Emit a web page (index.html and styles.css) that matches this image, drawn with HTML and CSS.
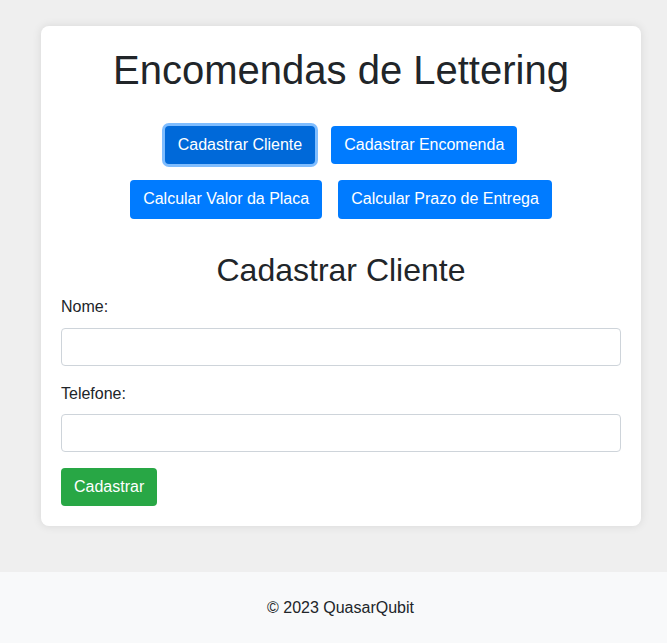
FILE: index.html
```html
<!DOCTYPE html>
<html lang="pt-BR">
<head>
<meta charset="utf-8">
<title>Encomendas de Lettering</title>
<link rel="stylesheet" href="styles.css">
</head>
<body>
<main class="page">
  <section class="card">
    <h1 class="title">Encomendas de Lettering</h1>
    <nav class="menu">
      <button class="btn btn-primary is-focused" type="button">Cadastrar Cliente</button>
      <button class="btn btn-primary" type="button">Cadastrar Encomenda</button>
      <button class="btn btn-primary" type="button">Calcular Valor da Placa</button>
      <button class="btn btn-primary" type="button">Calcular Prazo de Entrega</button>
    </nav>
    <h2 class="subtitle">Cadastrar Cliente</h2>
    <form class="form">
      <label class="label" for="nome">Nome:</label>
      <input class="input" id="nome" type="text">
      <label class="label" for="telefone">Telefone:</label>
      <input class="input input-last" id="telefone" type="text">
      <button class="btn btn-success" type="button">Cadastrar</button>
    </form>
  </section>
</main>
<footer class="footer">
  <p class="footer-text">© 2023 QuasarQubit</p>
</footer>
</body>
</html>
```

FILE: styles.css
```css
* {
  box-sizing: border-box;
}

body {
  margin: 0;
  background: #efefef;
  color: #212529;
  font-family: "Liberation Sans", Arial, sans-serif;
  font-size: 16px;
}

.page {
  padding: 26px 0 46px;
}

.card {
  width: 600px;
  margin-left: 41px;
  padding: 20px;
  background: #ffffff;
  border-radius: 8px;
  box-shadow: 0 0 10px rgba(0, 0, 0, 0.1);
}

.title {
  margin: 0 0 24px;
  font-size: 40px;
  font-weight: normal;
  line-height: 1.2;
  text-align: center;
}

.menu {
  display: flex;
  flex-wrap: wrap;
  justify-content: center;
}

.btn {
  margin: 8px;
  padding: 10px 13px;
  border: 0;
  border-radius: 4px;
  color: #ffffff;
  font-family: inherit;
  font-size: 16px;
  line-height: 18.4px;
  cursor: pointer;
}

.btn-primary {
  background: #007bff;
}

.btn-primary.is-focused {
  background: #0069d9;
  box-shadow: 0 0 0 3px rgba(0, 123, 255, 0.5);
}

.btn-success {
  margin: 0;
  background: #28a745;
}

.subtitle {
  margin: 24px 0 9px;
  font-size: 32px;
  font-weight: normal;
  line-height: 1.2;
  text-align: center;
}

.form {
  display: flex;
  flex-direction: column;
  align-items: flex-start;
}

.label {
  display: block;
  margin-bottom: 11px;
  line-height: 18.4px;
}

.input {
  display: block;
  width: 100%;
  height: 38px;
  margin: 0 0 19px;
  padding: 6px 12px;
  border: 1px solid #ced4da;
  border-radius: 4px;
  font-family: inherit;
  font-size: 16px;
  background: #ffffff;
}

.input-last {
  margin-bottom: 16px;
}

.footer {
  background: #f8f9fa;
  padding: 27px 0 27px 14px;
  text-align: center;
}

.footer-text {
  margin: 0;
  line-height: 18.4px;
}
```
